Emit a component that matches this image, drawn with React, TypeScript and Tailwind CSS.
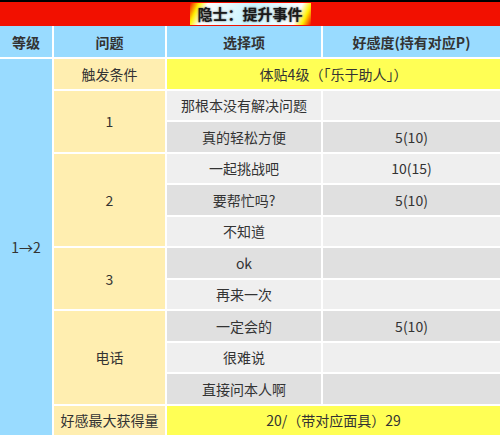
import React from 'react';

type Option = {
  text: string;
  value: string;
};

type Question = {
  label: string;
  options: Option[];
};

const questions: Question[] = [
  {
    label: '1',
    options: [
      { text: '那根本没有解决问题', value: '' },
      { text: '真的轻松方便', value: '5(10)' },
    ],
  },
  {
    label: '2',
    options: [
      { text: '一起挑战吧', value: '10(15)' },
      { text: '要帮忙吗?', value: '5(10)' },
      { text: '不知道', value: '' },
    ],
  },
  {
    label: '3',
    options: [
      { text: 'ok', value: '' },
      { text: '再来一次', value: '' },
    ],
  },
  {
    label: '电话',
    options: [
      { text: '一定会的', value: '5(10)' },
      { text: '很难说', value: '' },
      { text: '直接问本人啊', value: '' },
    ],
  },
];

const cell = 'border-2 border-white text-center align-middle p-0';

export default function App() {
  let rowIndex = 0;
  const totalRows = questions.reduce((n, q) => n + q.options.length, 0) + 2;

  return (
    <div
      className="w-[500px] h-[437px] overflow-hidden bg-white text-[#333] text-[14px] leading-[20px]"
      style={{ fontFamily: '"Noto Sans CJK SC", "Noto Sans", sans-serif' }}
    >
      <table className="w-[500px] table-fixed border-collapse">
        <colgroup>
          <col className="w-[53px]" />
          <col className="w-[113px]" />
          <col className="w-[156px]" />
          <col className="w-[178px]" />
        </colgroup>
        <thead>
          <tr>
            <th colSpan={4} className="h-[25px] p-0 bg-[#f21000] border-t-2 border-black">
              <div className="flex justify-center">
                <span className="px-2 leading-[22px] text-[15px] font-bold text-[#1a1a1a] bg-[linear-gradient(115deg,#f21000_0%,#ffee00_7%,#ffffff_14%,#c8f4ff_50%,#ffffff_86%,#ffee00_93%,#f21000_100%)] [text-shadow:0_0_2px_#555]">
                  隐士：提升事件
                </span>
              </div>
            </th>
          </tr>
          <tr className="bg-[#99dbff] font-bold">
            <th className={`${cell} h-[32px] border-t-0 border-l-0`}>等级</th>
            <th className={`${cell} border-t-0`}>问题</th>
            <th className={`${cell} border-t-0`}>选择项</th>
            <th className={`${cell} border-t-0 border-r-0`}>好感度(持有对应P)</th>
          </tr>
        </thead>
        <tbody>
          <tr className="h-[31.5px]">
            <td rowSpan={totalRows} className={`${cell} border-l-0 bg-[#99dbff]`}>
              1→2
            </td>
            <td className={`${cell} bg-[#ffeeb0]`}>触发条件</td>
            <td colSpan={2} className={`${cell} border-r-0 bg-[#ffff55]`}>
              体贴4级（「乐于助人」）
            </td>
          </tr>
          {questions.map((q) =>
            q.options.map((opt, i) => {
              const shade = rowIndex++ % 2 === 0 ? 'bg-[#efefef]' : 'bg-[#e0e0e0]';
              return (
                <tr key={q.label + opt.text} className="h-[31.5px]">
                  {i === 0 && (
                    <td rowSpan={q.options.length} className={`${cell} bg-[#ffeeb0]`}>
                      {q.label}
                    </td>
                  )}
                  <td className={`${cell} ${shade}`}>{opt.text}</td>
                  <td className={`${cell} border-r-0 ${shade}`}>{opt.value}</td>
                </tr>
              );
            })
          )}
          <tr className="h-[31.5px]">
            <td className={`${cell} bg-[#ffeeb0]`}>好感最大获得量</td>
            <td colSpan={2} className={`${cell} border-r-0 bg-[#ffff55]`}>
              20/（带对应面具）29
            </td>
          </tr>
        </tbody>
      </table>
    </div>
  );
}
